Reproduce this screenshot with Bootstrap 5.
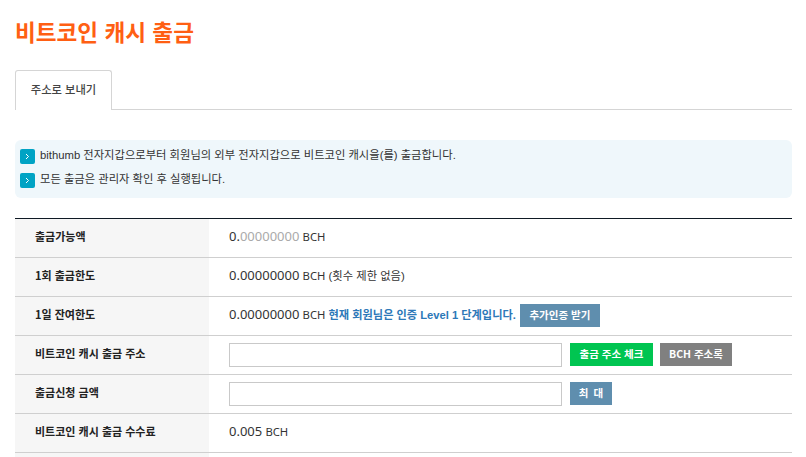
<!DOCTYPE html>
<html lang="ko">
<head>
<meta charset="utf-8">
<title>비트코인 캐시 출금</title>
<link href="https://cdn.jsdelivr.net/npm/bootstrap@5.3.0/dist/css/bootstrap.min.css" rel="stylesheet">
<style>
  body {
    font-family: "Liberation Sans", "Noto Sans CJK KR", sans-serif;
    font-size: 11.3px;
    color: #333;
    background: #fff;
    height: 457px;
    overflow: hidden;
  }
  .page-wrap { padding: 0 14px 0 15px; height: 457px; overflow: hidden; }
  .page-title {
    font-family: "Noto Sans CJK KR", sans-serif;
    font-size: 22.6px;
    font-weight: 700;
    line-height: 34px;
    color: #ff5f13;
    margin: 0;
    padding-top: 15px;
    height: 70px;
  }
  .tab-line { border-bottom: 1px solid #d5d5d5; height: 40px; }
  .tab-item {
    width: 97px;
    height: 40px;
    border: 1px solid #d5d5d5;
    border-bottom: 0;
    border-radius: 3px 3px 0 0;
    background: #fff;
    font-weight: 500;
    color: #444;
    padding-bottom: 1px;
  }
  .notice-box {
    margin-top: 30px;
    height: 58px;
    background: #eff7fb;
    border-radius: 6px;
    padding: 4px 5px;
  }
  .notice-line { height: 24px; }
  .notice-arrow {
    width: 15px;
    height: 15px;
    background: #00a3c4;
    border-radius: 2px;
    flex: none;
  }
  .notice-text { padding-bottom: 3px; margin-left: 5px; line-height: 18px; }
  .info-table { margin-top: 20px; border-top: 1px solid #0f1a24; }
  .info-row { height: 39px; border-bottom: 1px solid #cfcfcf; }
  .info-end { height: 4px; }
  .info-head {
    width: 194px;
    flex: none;
    background: #f6f6f6;
    padding: 0 0 4px 20px;
    font-size: 11px;
    font-family: "Noto Sans CJK KR", sans-serif;
    font-weight: 700;
    color: #222;
  }
  .info-val { padding: 0 0 2px 20px; }
  .num-txt { font-family: "Noto Sans", sans-serif; font-size: 13px; }
  .unit-txt { font-family: "Noto Sans", sans-serif; font-size: 11.3px; }
  .dim-num { color: #aaa; }
  .level-note { color: #2c78b8; font-weight: 700; font-size: 11.2px; }
  .addr-input {
    width: 333px;
    height: 24px;
    border: 1px solid #c9c9c9;
    background: #fff;
    margin-top: 1px;
  }
  .act-btn {
    height: 23px;
    border: 0;
    border-radius: 0;
    padding: 0 0 2px;
    font-size: 10.5px;
    font-family: "Noto Sans CJK KR", sans-serif;
    font-weight: 700;
    color: #fff;
    line-height: 21px;
    text-align: center;
  }
  .act-btn:hover { color: #fff; }
  .btn-steel { background: #5f8eae; }
  .btn-steel:hover { background: #5f8eae; }
  .btn-mint { background: #00c551; width: 83px; margin-left: 8px; }
  .btn-mint:hover { background: #00c551; }
  .btn-slate { background: #808080; width: 72px; margin-left: 7px; }
  .btn-slate:hover { background: #808080; }
  .w-cert { width: 80px; margin-left: 4px; }
  .w-max { width: 42px; margin-left: 8px; word-spacing: 2px; }
</style>
</head>
<body>
<div class="page-wrap">
  <h1 class="page-title">비트코인 캐시 출금</h1>

  <div class="tab-line">
    <div class="tab-item d-flex align-items-center justify-content-center">주소로 보내기</div>
  </div>

  <div class="notice-box">
    <div class="notice-line d-flex align-items-center">
      <span class="notice-arrow d-flex align-items-center justify-content-center">
        <svg width="5" height="7" viewBox="0 0 5 7"><path d="M1 1l2.5 2.5L1 6" fill="none" stroke="#fff" stroke-width="1"/></svg>
      </span>
      <span class="notice-text">bithumb 전자지갑으로부터 회원님의 외부 전자지갑으로 비트코인 캐시을(를) 출금합니다.</span>
    </div>
    <div class="notice-line d-flex align-items-center">
      <span class="notice-arrow d-flex align-items-center justify-content-center">
        <svg width="5" height="7" viewBox="0 0 5 7"><path d="M1 1l2.5 2.5L1 6" fill="none" stroke="#fff" stroke-width="1"/></svg>
      </span>
      <span class="notice-text">모든 출금은 관리자 확인 후 실행됩니다.</span>
    </div>
  </div>

  <div class="info-table">
    <div class="info-row d-flex">
      <div class="info-head d-flex align-items-center">출금가능액</div>
      <div class="info-val d-flex align-items-center"><span><span class="num-txt">0.<span class="dim-num">00000000</span></span> <span class="unit-txt">BCH</span></span></div>
    </div>
    <div class="info-row d-flex">
      <div class="info-head d-flex align-items-center">1회 출금한도</div>
      <div class="info-val d-flex align-items-center"><span><span class="num-txt">0.00000000</span> <span class="unit-txt">BCH</span> (횟수 제한 없음)</span></div>
    </div>
    <div class="info-row d-flex">
      <div class="info-head d-flex align-items-center">1일 잔여한도</div>
      <div class="info-val d-flex align-items-center">
        <span><span class="num-txt">0.00000000</span> <span class="unit-txt">BCH</span> <span class="level-note">현재 회원님은 인증 Level 1 단계입니다.</span></span>
        <button type="button" class="btn act-btn btn-steel w-cert">추가인증 받기</button>
      </div>
    </div>
    <div class="info-row d-flex">
      <div class="info-head d-flex align-items-center">비트코인 캐시 출금 주소</div>
      <div class="info-val d-flex align-items-center">
        <input type="text" class="addr-input" aria-label="출금 주소">
        <button type="button" class="btn act-btn btn-mint">출금 주소 체크</button>
        <button type="button" class="btn act-btn btn-slate">BCH 주소록</button>
      </div>
    </div>
    <div class="info-row d-flex">
      <div class="info-head d-flex align-items-center">출금신청 금액</div>
      <div class="info-val d-flex align-items-center">
        <input type="text" class="addr-input" aria-label="출금신청 금액">
        <button type="button" class="btn act-btn btn-steel w-max">최 대</button>
      </div>
    </div>
    <div class="info-row d-flex">
      <div class="info-head d-flex align-items-center">비트코인 캐시 출금 수수료</div>
      <div class="info-val d-flex align-items-center"><span><span class="num-txt">0.005</span> <span class="unit-txt">BCH</span></span></div>
    </div>
    <div class="info-end d-flex">
      <div class="info-head"></div>
    </div>
  </div>
</div>
<script src="https://cdn.jsdelivr.net/npm/bootstrap@5.3.0/dist/js/bootstrap.bundle.min.js"></script>
</body>
</html>
